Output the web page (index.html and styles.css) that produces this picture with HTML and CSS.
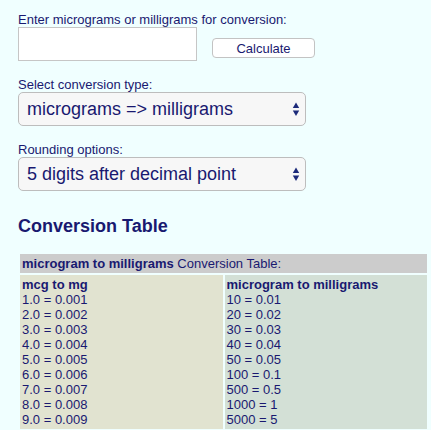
FILE: index.html
```html
<!DOCTYPE html>
<html lang="en">

<head>
	<meta charset="UTF-8">
	<meta name="viewport" content="width=device-width, initial-scale=1.0">
	<title>Micrograms to Milligrams</title>
	<link rel="stylesheet" href="styles.css">
</head>

<body>
	<div class="page">
		<form class="converter">
			<label class="field-label" for="amount">Enter micrograms or milligrams for conversion:</label>
			<div class="input-row">
				<input id="amount" class="amount" type="text">
				<button type="button" class="calc-btn">Calculate</button>
			</div>

			<label class="field-label" for="convType">Select conversion type:</label>
			<div class="select-wrap">
				<select id="convType" class="picker">
					<option>micrograms =&gt; milligrams</option>
					<option>milligrams =&gt; micrograms</option>
				</select>
				<svg class="picker-arrows" width="8" height="15" viewBox="0 0 8 15">
					<path d="M4 0.5 L7.2 6 L0.8 6 Z" fill="#1c2a7a" />
					<path d="M0.8 8.5 L7.2 8.5 L4 14 Z" fill="#1c2a7a" />
				</svg>
			</div>

			<label class="field-label" for="rounding">Rounding options:</label>
			<div class="select-wrap">
				<select id="rounding" class="picker">
					<option>5 digits after decimal point</option>
					<option>3 digits after decimal point</option>
				</select>
				<svg class="picker-arrows" width="8" height="15" viewBox="0 0 8 15">
					<path d="M4 0.5 L7.2 6 L0.8 6 Z" fill="#1c2a7a" />
					<path d="M0.8 8.5 L7.2 8.5 L4 14 Z" fill="#1c2a7a" />
				</svg>
			</div>
		</form>

		<h2 class="table-title">Conversion Table</h2>

		<table class="conv-table">
			<tr>
				<th colspan="2"><b>microgram to milligrams</b> Conversion Table:</th>
			</tr>
			<tr>
				<td class="col-left">
					<b>mcg to mg</b><br>
					1.0 = 0.001<br>
					2.0 = 0.002<br>
					3.0 = 0.003<br>
					4.0 = 0.004<br>
					5.0 = 0.005<br>
					6.0 = 0.006<br>
					7.0 = 0.007<br>
					8.0 = 0.008<br>
					9.0 = 0.009
				</td>
				<td class="col-right">
					<b>microgram to milligrams</b><br>
					10 = 0.01<br>
					20 = 0.02<br>
					30 = 0.03<br>
					40 = 0.04<br>
					50 = 0.05<br>
					100 = 0.1<br>
					500 = 0.5<br>
					1000 = 1<br>
					5000 = 5
				</td>
			</tr>
		</table>
	</div>
</body>

</html>
```

FILE: styles.css
```css
html,
body {
	margin: 0;
	padding: 0;
	background-color: #f0ffff;
	overflow: hidden;
}

.page {
	padding: 12px 0 0 18px;
	font-family: "Liberation Sans", Arial, Helvetica, sans-serif;
	color: #191970;
}

.converter {
	display: flex;
	flex-direction: column;
	align-items: flex-start;
}

.field-label {
	font-size: 13px;
	line-height: 15px;
	height: 15px;
}

.input-row {
	display: flex;
	align-items: flex-end;
	gap: 15px;
	margin-bottom: 16px;
}

.amount {
	box-sizing: border-box;
	width: 179px;
	height: 34px;
	margin: 0;
	border: 1px solid #c6c6c6;
	background-color: #fff;
	font-size: 16px;
	padding: 0 6px;
	outline: none;
}

.calc-btn {
	box-sizing: border-box;
	width: 103px;
	height: 20px;
	margin: 0 0 3px 0;
	padding: 0;
	background-color: #fff;
	border: 1px solid #c3c3c3;
	border-radius: 4px;
	font-family: "Liberation Sans", Arial, sans-serif;
	font-size: 13px;
	color: #191970;
	cursor: pointer;
}

.select-wrap {
	position: relative;
	margin-bottom: 16px;
}

.picker {
	-webkit-appearance: none;
	appearance: none;
	box-sizing: border-box;
	width: 288px;
	height: 34px;
	margin: 0;
	padding: 0 0 0 8px;
	border: 1px solid #bdbdbd;
	border-radius: 5px;
	background-color: #f7f7f7;
	font-family: "Liberation Sans", Arial, sans-serif;
	font-size: 18px;
	color: #191970;
	outline: none;
}

.picker-arrows {
	position: absolute;
	right: 6px;
	top: 10px;
	pointer-events: none;
}

.table-title {
	margin: 9px 0 15px 0;
	font-size: 18px;
	line-height: 21px;
	font-weight: bold;
}

.conv-table {
	width: 411px;
	margin-left: 0;
	border-spacing: 2px;
	font-size: 13px;
	line-height: 15px;
	table-layout: fixed;
}

.conv-table th {
	background-color: #cccccc;
	text-align: left;
	font-weight: normal;
	padding: 2px;
}

.conv-table td {
	vertical-align: top;
	padding: 2px 2px 2px 2px;
	width: 50%;
}

.col-left {
	background-color: #e1e3d0;
}

.col-right {
	background-color: #d3e0d6;
}
```
